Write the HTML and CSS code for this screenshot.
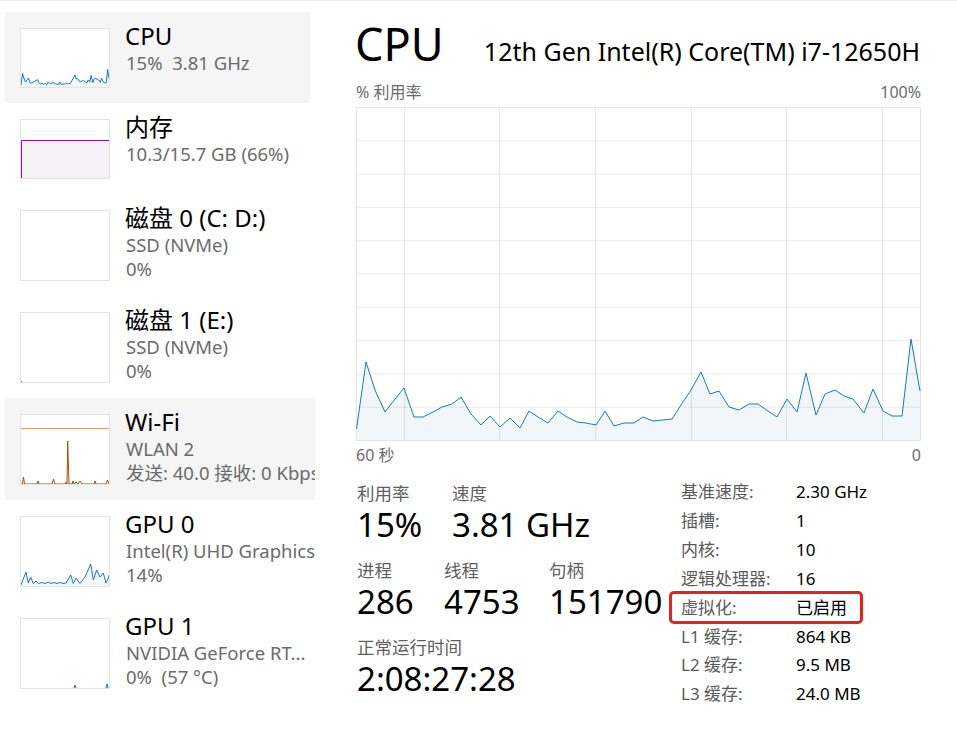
FILE: index.html
```html
<!DOCTYPE html>
<html lang="zh-CN">
<head>
<meta charset="utf-8">
<title>任务管理器 - 性能</title>
<link rel="stylesheet" href="styles.css">
</head>
<body>
<div class="app">
  <aside class="side">
    <div class="item item-sel item-cpu">
      <div class="thumb">
        <svg class="thumb-svg" viewBox="0 0 564 333" preserveAspectRatio="none">
          <polygon class="cpu-fill" points="0,333 0,322 10,255 19,283 29,305 39,292 48,281 58,310 67,310 77,305 86,300 96,297 105,290 115,307 125,318 134,309 144,320 154,311 164,321 173,304 182,310 192,316 202,304 211,310 221,315 230,316 240,318 249,304 258,319 268,316 278,316 287,310 297,314 306,313 316,312 325,298 335,283 345,265 354,287 363,284 373,300 383,303 393,297 402,297 412,304 421,310 431,292 441,305 450,266 460,308 469,287 479,283 488,289 497,292 508,306 517,282 527,304 536,309 546,309 555,232 564,284 564,333"/>
          <polyline class="cpu-line" vector-effect="non-scaling-stroke" points="0,322 10,255 19,283 29,305 39,292 48,281 58,310 67,310 77,305 86,300 96,297 105,290 115,307 125,318 134,309 144,320 154,311 164,321 173,304 182,310 192,316 202,304 211,310 221,315 230,316 240,318 249,304 258,319 268,316 278,316 287,310 297,314 306,313 316,312 325,298 335,283 345,265 354,287 363,284 373,300 383,303 393,297 402,297 412,304 421,310 431,292 441,305 450,266 460,308 469,287 479,283 488,289 497,292 508,306 517,282 527,304 536,309 546,309 555,232 564,284"/>
        </svg>
      </div>
      <div class="info">
        <div class="title">CPU</div>
        <div class="sub">15%&nbsp; 3.81 GHz</div>
      </div>
    </div>

    <div class="item">
      <div class="thumb">
        <svg class="thumb-svg" viewBox="0 0 88 58" preserveAspectRatio="none">
          <rect class="mem-fill" x="0" y="20" width="88" height="38"/>
          <polyline class="mem-line" points="0.5,58 0.5,20.5 88,20.5"/>
        </svg>
      </div>
      <div class="info">
        <div class="title">内存</div>
        <div class="sub">10.3/15.7 GB (66%)</div>
      </div>
    </div>

    <div class="item">
      <div class="thumb thumb-tall"></div>
      <div class="info">
        <div class="title">磁盘 0 (C: D:)</div>
        <div class="sub">SSD (NVMe)</div>
        <div class="sub">0%</div>
      </div>
    </div>

    <div class="item">
      <div class="thumb thumb-tall">
        <svg class="thumb-svg" viewBox="0 0 88 69" preserveAspectRatio="none">
          <rect class="disk-dot" x="0" y="68" width="1" height="1"/>
        </svg>
      </div>
      <div class="info">
        <div class="title">磁盘 1 (E:)</div>
        <div class="sub">SSD (NVMe)</div>
        <div class="sub">0%</div>
      </div>
    </div>

    <div class="item item-sel item-wifi">
      <div class="thumb thumb-tall">
        <svg class="thumb-svg" viewBox="0 0 88 69" preserveAspectRatio="none">
          <line class="net-max" x1="0" y1="13.5" x2="88" y2="13.5"/>
          <polyline class="net-line" points="0,69 1.5,69 2.5,62 3.5,69 16,69 17,66 18,69 31,69 32.5,64 34,69 44,69 45,67 46,69 46.7,26 48,69 51,69 52,66 53,69 55,67 57,69 59,66 61,69 73,69 74,66 75,69 85,69 86.5,65 88,69"/>
        </svg>
      </div>
      <div class="info">
        <div class="title">Wi-Fi</div>
        <div class="sub">WLAN 2</div>
        <div class="sub">发送: 40.0 接收: 0 Kbps</div>
      </div>
    </div>

    <div class="item">
      <div class="thumb thumb-tall">
        <svg class="thumb-svg" viewBox="0 0 88 69" preserveAspectRatio="none">
          <polygon class="cpu-fill" points="0,69 0,68 5,55 7.3,66 9.7,60 12.3,66.5 15,64 17.3,66.5 21,65.5 24,66.5 27,65 30,66.5 33,65.5 36,66.5 39,65.5 42,66.5 45,66 49.7,58 52.3,66.5 55,61 59,66.5 64,60 69.7,47 72.3,63 75.7,53 79,60 82.3,56 85,66 87.7,60 88,58 88,69"/>
          <polyline class="cpu-line" points="0,68 5,55 7.3,66 9.7,60 12.3,66.5 15,64 17.3,66.5 21,65.5 24,66.5 27,65 30,66.5 33,65.5 36,66.5 39,65.5 42,66.5 45,66 49.7,58 52.3,66.5 55,61 59,66.5 64,60 69.7,47 72.3,63 75.7,53 79,60 82.3,56 85,66 87.7,60 88,58"/>
        </svg>
      </div>
      <div class="info">
        <div class="title">GPU 0</div>
        <div class="sub">Intel(R) UHD Graphics</div>
        <div class="sub">14%</div>
      </div>
    </div>

    <div class="item">
      <div class="thumb thumb-tall">
        <svg class="thumb-svg" viewBox="0 0 88 69" preserveAspectRatio="none">
          <polyline class="cpu-line" points="53,69 54,66 55,69"/>
          <polyline class="cpu-line" points="85,69 86,65 87,69"/>
        </svg>
      </div>
      <div class="info">
        <div class="title">GPU 1</div>
        <div class="sub">NVIDIA GeForce RT...</div>
        <div class="sub">0%&nbsp; (57 °C)</div>
      </div>
    </div>
  </aside>

  <main class="main">
    <header class="head">
      <h1 class="head-title">CPU</h1>
      <div class="head-model">12th Gen Intel(R) Core(TM) i7-12650H</div>
    </header>

    <div class="axis axis-top">
      <span>% 利用率</span>
      <span>100%</span>
    </div>

    <div class="chart">
      <svg class="chart-svg" width="565" height="334" viewBox="0 0 565 334">
        <polygon class="cpu-fill" points="0,333 0,322 10,255 19,283 29,305 39,292 48,281 58,310 67,310 77,305 86,300 96,297 105,290 115,307 125,318 134,309 144,320 154,311 164,321 173,304 182,310 192,316 202,304 211,310 221,315 230,316 240,318 249,304 258,319 268,316 278,316 287,310 297,314 306,313 316,312 325,298 335,283 345,265 354,287 363,284 373,300 383,303 393,297 402,297 412,304 421,310 431,292 441,305 450,266 460,308 469,287 479,283 488,289 497,292 508,306 517,282 527,304 536,309 546,309 555,232 564,284 564,333"/>
        <g class="grid">
          <line x1="0" y1="33.8" x2="564" y2="33.8"/>
          <line x1="0" y1="67.1" x2="564" y2="67.1"/>
          <line x1="0" y1="100.4" x2="564" y2="100.4"/>
          <line x1="0" y1="133.7" x2="564" y2="133.7"/>
          <line x1="0" y1="167" x2="564" y2="167"/>
          <line x1="0" y1="200.3" x2="564" y2="200.3"/>
          <line x1="0" y1="233.6" x2="564" y2="233.6"/>
          <line x1="0" y1="266.9" x2="564" y2="266.9"/>
          <line x1="0" y1="300.2" x2="564" y2="300.2"/>
          <line x1="48.5" y1="0" x2="48.5" y2="333"/>
          <line x1="143.5" y1="0" x2="143.5" y2="333"/>
          <line x1="239.5" y1="0" x2="239.5" y2="333"/>
          <line x1="335.5" y1="0" x2="335.5" y2="333"/>
          <line x1="430.5" y1="0" x2="430.5" y2="333"/>
          <line x1="526.5" y1="0" x2="526.5" y2="333"/>
        </g>
        <rect class="chart-border" x="0.5" y="0.5" width="564" height="333"/>
        <polyline class="cpu-line" points="0.5,322 10,255 19,283 29,305 39,292 48,281 58,310 67,310 77,305 86,300 96,297 105,290 115,307 125,318 134,309 144,320 154,311 164,321 173,304 182,310 192,316 202,304 211,310 221,315 230,316 240,318 249,304 258,319 268,316 278,316 287,310 297,314 306,313 316,312 325,298 335,283 345,265 354,287 363,284 373,300 383,303 393,297 402,297 412,304 421,310 431,292 441,305 450,266 460,308 469,287 479,283 488,289 497,292 508,306 517,282 527,304 536,309 546,309 555,232 564,284"/>
      </svg>
    </div>

    <div class="axis axis-bottom">
      <span>60 秒</span>
      <span>0</span>
    </div>

    <section class="stats">
      <div class="dyn">
        <div class="dyn-row dyn-row-1">
          <div class="stat"><div class="stat-label">利用率</div><div class="stat-value">15%</div></div>
          <div class="stat"><div class="stat-label">速度</div><div class="stat-value">3.81 GHz</div></div>
        </div>
        <div class="dyn-row dyn-row-2">
          <div class="stat"><div class="stat-label">进程</div><div class="stat-value">286</div></div>
          <div class="stat"><div class="stat-label">线程</div><div class="stat-value">4753</div></div>
          <div class="stat"><div class="stat-label">句柄</div><div class="stat-value">151790</div></div>
        </div>
        <div class="dyn-row">
          <div class="stat"><div class="stat-label">正常运行时间</div><div class="stat-value">2:08:27:28</div></div>
        </div>
      </div>

      <dl class="specs">
        <dt>基准速度:</dt><dd>2.30 GHz</dd>
        <dt>插槽:</dt><dd>1</dd>
        <dt>内核:</dt><dd>10</dd>
        <dt>逻辑处理器:</dt><dd>16</dd>
        <dt class="spec-mark">虚拟化:<span class="mark-box"></span></dt><dd>已启用</dd>
        <dt>L1 缓存:</dt><dd>864 KB</dd>
        <dt>L2 缓存:</dt><dd>9.5 MB</dd>
        <dt>L3 缓存:</dt><dd>24.0 MB</dd>
      </dl>
    </section>
  </main>
</div>
</body>
</html>
```

FILE: styles.css
```css
* {
  box-sizing: border-box;
}

html, body {
  margin: 0;
  padding: 0;
  background: #ffffff;
}

body {
  font-family: "Noto Sans", "Noto Sans CJK SC", sans-serif;
  color: #000000;
  width: 957px;
  height: 741px;
  overflow: hidden;
}

.app {
  display: flex;
  align-items: flex-start;
  border-top: 1px solid #ededed;
  height: 741px;
}

/* ---------- left list ---------- */
.side {
  width: 310px;
  margin-left: 5px;
  padding-top: 11px;
  flex: none;
}

.item {
  display: flex;
  align-items: flex-start;
  padding: 16px 0 15px 15px;
  overflow: hidden;
  white-space: nowrap;
}

.item-sel {
  background: #f5f5f5;
}

.item-cpu {
  margin-right: 5px;
}

.thumb {
  width: 90px;
  height: 60px;
  flex: none;
  border: 1px solid #e3e3e3;
  background: #ffffff;
}

.thumb-tall {
  height: 71px;
}

.thumb-svg {
  display: block;
  width: 100%;
  height: 100%;
}

.info {
  margin-left: 15px;
  margin-top: -8px;
  min-width: 0;
}

.title {
  font-size: 24px;
  line-height: 31px;
  color: #000000;
}

.sub {
  font-size: 18.5px;
  line-height: 24px;
  color: #6b6b6b;
  padding-left: 1px;
}

.cpu-line {
  fill: none;
  stroke: #117dbb;
  stroke-width: 1;
  stroke-linejoin: round;
}

.cpu-fill {
  fill: #f1f6fa;
}

.mem-fill {
  fill: #f4f2f4;
}

.mem-line {
  fill: none;
  stroke: #8b12ae;
  stroke-width: 1;
}

.net-max {
  stroke: #d79a68;
  stroke-width: 1;
}

.net-line {
  fill: none;
  stroke: #a74f01;
  stroke-width: 1;
}

.disk-dot {
  fill: #4da60c;
}

/* ---------- main ---------- */
.main {
  margin-left: 41px;
  width: 565px;
  padding-top: 15px;
  flex: none;
}

.head {
  display: flex;
  align-items: baseline;
  justify-content: space-between;
  height: 56px;
}

.head-title {
  margin: 0;
  font-size: 45px;
  line-height: 56px;
  font-weight: 400;
  margin-left: -1px;
}

.head-model {
  font-size: 25px;
  line-height: 56px;
  margin-right: 1px;
}

.axis {
  display: flex;
  justify-content: space-between;
  font-size: 16px;
  line-height: 20px;
  color: #6b6b6b;
}

.axis-top {
  margin-top: 10px;
}

.chart {
  margin-top: 5px;
  height: 334px;
}

.chart-svg {
  display: block;
}

.chart-border {
  fill: none;
  stroke: #e4e4e4;
  stroke-width: 1;
}

.grid line {
  stroke: rgba(0, 0, 0, 0.085);
  stroke-width: 1;
}

.axis-bottom {
  margin-top: 4px;
}

/* ---------- stats ---------- */
.stats {
  display: flex;
  margin-top: 17px;
}

.dyn {
  width: 325px;
  flex: none;
}

.dyn-row {
  display: grid;
  grid-auto-flow: column;
  justify-content: start;
  margin-bottom: 13px;
}

.dyn-row-1 {
  grid-template-columns: 95px auto;
}

.dyn-row-2 {
  grid-template-columns: 87px 105px auto;
}

.stat {
  padding-left: 1px;
}

.stat-label {
  font-size: 17.5px;
  line-height: 22px;
  color: #5f5f5f;
}

.stat-value {
  font-size: 33px;
  line-height: 42px;
  white-space: nowrap;
}

.specs {
  display: grid;
  grid-template-columns: 115px auto;
  grid-auto-rows: 28.85px;
  align-items: center;
  margin: -4px 0 0 0;
  font-size: 17px;
  line-height: 22px;
}

.specs dt {
  color: #5a5a5a;
}

.specs dd {
  margin: 0;
  color: #000000;
}

.spec-mark {
  position: relative;
}

.mark-box {
  position: absolute;
  left: -12px;
  top: -6px;
  width: 194px;
  height: 33px;
  border: 3px solid #e81f1f;
  border-radius: 5px;
}
```
